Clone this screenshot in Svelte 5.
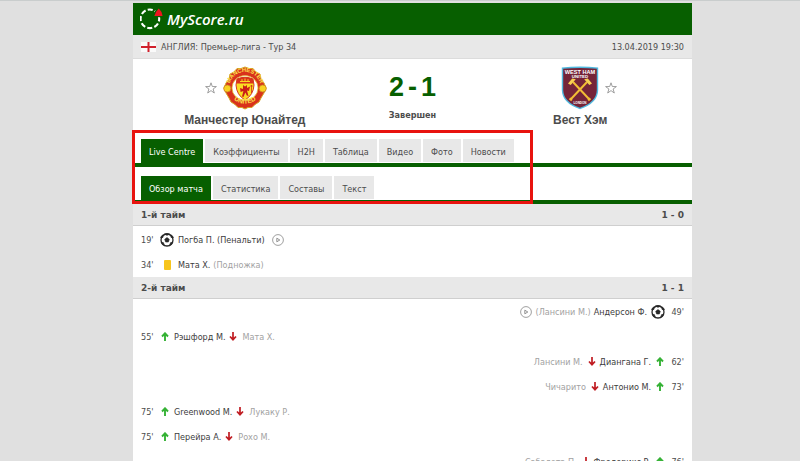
<script>
  const mainTabs = ['Live Centre', 'Коэффициенты', 'H2H', 'Таблица', 'Видео', 'Фото', 'Новости'];
  const subTabs = ['Обзор матча', 'Статистика', 'Составы', 'Текст'];
  let mainActive = $state(0);
  let subActive = $state(0);

  const firstHalf = [
    { side: 'home', time: "19'", icon: 'ball', player: 'Погба П.', detail: '(Пенальти)', video: true },
    { side: 'home', time: "34'", icon: 'card', player: 'Мата Х.', note: '(Подножка)' }
  ];
  const secondHalf = [
    { side: 'away', time: "49'", icon: 'ball', player: 'Андерсон Ф.', note: '(Лансини М.)', video: true },
    { side: 'home', time: "55'", icon: 'sub', player: 'Рэшфорд М.', out: 'Мата Х.' },
    { side: 'away', time: "62'", icon: 'sub', player: 'Диангана Г.', out: 'Лансини М.' },
    { side: 'away', time: "73'", icon: 'sub', player: 'Антонио М.', out: 'Чичарито' },
    { side: 'home', time: "75'", icon: 'sub', player: 'Greenwood M.', out: 'Лукаку Р.' },
    { side: 'home', time: "75'", icon: 'sub', player: 'Перейра А.', out: 'Рохо М.' },
    { side: 'away', time: "76'", icon: 'sub', player: 'Фредерикс Р.', out: 'Сабалета П.' }
  ];
</script>

{#snippet star(label)}
  <button class="star" aria-label={label}>
    <svg width="12" height="12" viewBox="0 0 12 12"><path d="M6 .8 7.3 4.5 11.4 4.6 8.1 7 9.3 11 6 8.6 2.7 11 3.9 7 .6 4.6 4.7 4.5Z" fill="#fff" stroke="#888" stroke-width=".8" /></svg>
  </button>
{/snippet}

{#snippet arrow(dir)}
  <svg class="arrow" width="8" height="9" viewBox="0 0 8 9">
    {#if dir === 'up'}
      <path d="M4 9V1.5M1 4.5 4 1.3 7 4.5" fill="none" stroke="#35b235" stroke-width="1.9" />
    {:else}
      <path d="M4 0V7.5M1 4.5 4 7.7 7 4.5" fill="none" stroke="#c01c22" stroke-width="1.7" />
    {/if}
  </svg>
{/snippet}

{#snippet mark(icon)}
  {#if icon === 'ball'}
    <svg width="14" height="14" viewBox="0 0 14 14">
      <circle cx="7" cy="7" r="6" fill="#fff" stroke="#282828" stroke-width="1.3" />
      <path d="M7 4.6 9.3 6.3 8.4 9H5.6L4.7 6.3ZM4.5.9 7 2.4 9.5.9 7 .3ZM.5 5 3 4.4 3.4 1.6 1.4 3ZM13.5 5 11 4.4 10.6 1.6 12.6 3ZM1.3 9.2 3.4 9.6 4.6 12.8 2.4 11.6ZM12.7 9.2 10.6 9.6 9.4 12.8 11.6 11.6Z" fill="#282828" stroke="#282828" stroke-width=".6" />
    </svg>
  {:else if icon === 'card'}
    <svg width="7" height="10" viewBox="0 0 7 10"><rect width="7" height="10" rx="1" fill="#f7c51d" /></svg>
  {:else}
    {@render arrow('up')}
  {/if}
{/snippet}

{#snippet events(list)}
  <ul class="events">
    {#each list as e}
      <li class={e.side}>
        <span class="time">{e.time}</span>
        <span class="mark" class:narrow={e.icon === 'sub'}>{@render mark(e.icon)}</span>
        <span class="player"><a href="#player">{e.player}</a>{#if e.detail}&nbsp;{e.detail}{/if}</span>
        {#if e.out}
          <span class="down">{@render arrow('down')}</span>
          <a class="muted" href="#player">{e.out}</a>
        {/if}
        {#if e.note}<span class="muted">{e.note}</span>{/if}
        {#if e.video}
          <button class="play" aria-label="Видео">
            <svg width="12" height="12" viewBox="0 0 12 12"><circle cx="6" cy="6" r="5.4" fill="#fff" stroke="#888" stroke-width=".8" /><path d="M4.8 4.2 7.8 6 4.8 7.8Z" fill="none" stroke="#777" stroke-width=".8" /></svg>
          </button>
        {/if}
      </li>
    {/each}
  </ul>
{/snippet}

<div class="page">
  <div class="sheet">
    <header>
      <a class="brand" href="#home">
        <svg width="25" height="24" viewBox="0 0 25 24">
          <circle cx="9.9" cy="11.8" r="9.3" fill="none" stroke="#fff" stroke-width="2.1" stroke-dasharray="5.1 2.2" stroke-dashoffset="2.5" />
          <path d="M13.4 9.4 17.5 1 22.5 9.4Z" fill="#075f00" stroke="#075f00" stroke-width="1.6" />
          <path d="M14.4 9Q15.4 4.6 18.8 1.5Q22 4.4 22.6 9Z" fill="#ed1520" />
        </svg>
        <span>MyScore.ru</span>
      </a>
    </header>

    <div class="league">
      <svg width="15" height="10" viewBox="0 0 15 10"><rect width="15" height="10" fill="#fafafa" /><path d="M0 5H15M7.5 0V10" stroke="#d0202c" stroke-width="2" /></svg>
      <span>АНГЛИЯ: <a href="#league">Премьер-лига - Тур 34</a></span>
      <time datetime="2019-04-13T19:30">13.04.2019 19:30</time>
    </div>

    <section class="match">
      <div class="team">
        <div class="crest">
          {@render star('Добавить Манчестер Юнайтед в избранное')}
          <svg width="44" height="44" viewBox="0 0 44 44">
            <defs>
              <path id="arcTop" d="M6.6 19A15.6 15.6 0 0 1 37.4 19" />
              <path id="arcBottom" d="M5.4 26A17.6 17.6 0 0 0 38.6 26" />
            </defs>
            <path d="M22 1 26 2.5 30 2.5 33 6 37 8 38 13 41 17 43 22 41 27 38 32 36 36 32 38.5 29 41.5 25 41.5 22 43 19 41.5 15 41.5 12 38.5 8 36 6 32 3 27 1 22 3 17 6 13 7 8 11 6 14 2.5 18 2.5Z" fill="#d9321c" stroke="#d7a726" stroke-width="1" />
            <ellipse cx="22" cy="22" rx="13" ry="12.4" fill="#fff" stroke="#e4b82a" stroke-width=".8" />
            <path d="M14 13Q22 9.5 30 13L31 19Q30.5 29 22 34Q13.5 29 13 19Z" fill="#fadb22" stroke="#d33a20" stroke-width="1" />
            <path d="M14 13Q22 9.5 30 13L30.6 17.5H13.4Z" fill="#d9321c" />
            <path d="M17 15.5H27M19 13.2V15.5M22 12.5V15.5M25 13.2V15.5" stroke="#fadb22" stroke-width="1" />
            <path d="M20 19 22 20.5 24 19 24 22 27 20.5 26 25 24 24.5 25.5 30 23.8 29.5 22.3 26.5 20.5 31 19 30.5 20.4 25 17.6 26 17 22 20 23Z" fill="#c91d18" />
            <path d="M28.5 19V27M27.3 20H29.7" stroke="#c91d18" stroke-width=".7" />
            <circle cx="4.3" cy="22.5" r="3.6" fill="#f8d321" stroke="#cc7c20" stroke-width=".8" />
            <circle cx="39.7" cy="22.5" r="3.6" fill="#f8d321" stroke="#cc7c20" stroke-width=".8" />
            <text class="crestText" fill="#fce24a" font-size="5.8"><textPath href="#arcTop" startOffset="50%" text-anchor="middle">MANCHESTER</textPath></text>
            <text class="crestText" fill="#fce24a" font-size="6.5"><textPath href="#arcBottom" startOffset="50%" text-anchor="middle">UNITED</textPath></text>
          </svg>
        </div>
        <a class="name" href="#home-team">Манчестер Юнайтед</a>
      </div>
      <div class="result">
        <strong><span>2</span> <span>-</span> <span>1</span></strong>
        <span class="status">Завершен</span>
      </div>
      <div class="team">
        <div class="crest right">
          {@render star('Добавить Вест Хэм в избранное')}
          <svg width="38" height="44" viewBox="0 0 38 44">
            <path d="M.8 1.5Q19 -.3 37.2 1.5V24Q37 37 19 43.3Q1 37 .8 24Z" fill="#50b9df" />
            <path d="M2.2 2.8Q19 1.2 35.8 2.8V24Q35.5 36 19 41.8Q2.5 36 2.2 24Z" fill="#752438" />
            <path d="M12 16 28 33M26 16 10 33" stroke="#f2bd35" stroke-width="2" />
            <path d="M27.6 32.6 29 34.2M10.4 32.6 9 34.2" stroke="#f2bd35" stroke-width="3" />
            <path d="M7 17.5 11.2 12.6 14.8 13.3 9.7 19ZM31 17.5 26.8 12.6 23.2 13.3 28.3 19Z" fill="#f7cf53" />
            <text class="crestText" x="19" y="8" fill="#fff" font-size="5.6" text-anchor="middle">WEST HAM</text>
            <text class="crestText" x="19" y="11.8" fill="#fff" font-size="4.4" text-anchor="middle">UNITED</text>
            <text class="crestText" x="19" y="38" fill="#fff" font-size="3" text-anchor="middle">LONDON</text>
          </svg>
        </div>
        <a class="name" href="#away-team">Вест Хэм</a>
      </div>
    </section>

    <div class="navs">
      <nav>
        {#each mainTabs as tab, i}
          <button class:active={mainActive === i} onclick={() => (mainActive = i)}>{tab}</button>
        {/each}
      </nav>
      <nav>
        {#each subTabs as tab, i}
          <button class:active={subActive === i} onclick={() => (subActive = i)}>{tab}</button>
        {/each}
      </nav>
      <div class="highlight"></div>
    </div>

    <h2><span>1-й тайм</span><span>1 - 0</span></h2>
    {@render events(firstHalf)}
    <h2><span>2-й тайм</span><span>1 - 1</span></h2>
    {@render events(secondHalf)}
  </div>
</div>

<style>
  :global(body) {
    background: #e0e0e0;
    overflow: hidden;
  }
  .page {
    box-sizing: border-box;
    height: 100vh;
    overflow: hidden;
    padding: 0 108px 0 133px;
    border-top: 1px solid #c9cdcd;
    font: 9px/16px 'DejaVu Sans Condensed', 'Noto Sans', sans-serif;
    color: #4c4c4c;
  }
  .sheet {
    margin-top: 2px;
    background: #fff;
  }
  a {
    color: inherit;
    text-decoration: none;
  }
  button {
    font: inherit;
    color: inherit;
    border: 0;
    padding: 0;
    background: none;
    cursor: pointer;
  }
  svg {
    display: block;
    flex: none;
  }
  header {
    display: flex;
    align-items: center;
    height: 32px;
    padding-left: 7px;
    background: #075f00;
  }
  .brand {
    display: flex;
    align-items: center;
    gap: 2px;
    color: #fff;
    font: italic 600 15px/20px 'Open Sans', sans-serif;
  }
  .league {
    display: flex;
    align-items: center;
    gap: 5px;
    height: 23px;
    padding: 0 8px;
    background: #e8e8e8;
    border-bottom: 1px solid #dcdcdc;
  }
  .league time {
    margin-left: auto;
  }
  .match {
    display: grid;
    grid-template-columns: 2fr 1fr 2fr;
    padding-top: 7px;
    height: 73px;
  }
  .team {
    display: flex;
    flex-direction: column;
    align-items: center;
    gap: 1px;
  }
  .crest {
    display: flex;
    align-items: center;
    gap: 6px;
    margin-right: 18px;
  }
  .crest.right {
    flex-direction: row-reverse;
    margin: 0 0 0 18px;
  }
  .crestText {
    font-family: 'Liberation Sans', sans-serif;
    font-weight: bold;
  }
  .name {
    font: bold 12px/18px 'Liberation Sans', sans-serif;
  }
  .result {
    display: flex;
    flex-direction: column;
    align-items: center;
    padding-top: 6px;
    gap: 6px;
  }
  .result strong {
    display: flex;
    gap: 4px;
    font: bold 27px/30px 'Liberation Sans', sans-serif;
    color: #075f00;
  }
  .status {
    font-weight: bold;
    line-height: 14px;
  }
  .navs {
    position: relative;
  }
  nav {
    display: flex;
    gap: 2px;
    padding: 0 8px;
    border-bottom: 4px solid #075f00;
  }
  nav + nav {
    margin-top: 9px;
  }
  nav button {
    height: 24px;
    padding: 2px 8px 0;
    background: #e8e8e8;
    border-bottom: 1px solid #fff;
  }
  nav button.active {
    background: #075f00;
    border-color: #075f00;
    color: #fff;
  }
  .highlight {
    position: absolute;
    top: -9px;
    left: -1px;
    bottom: 0;
    width: 395px;
    border: 3px solid #e8130f;
    pointer-events: none;
  }
  h2 {
    display: flex;
    justify-content: space-between;
    margin: 0;
    padding: 1px 8px 0;
    border-bottom: 1px solid #cfcfcf;
    background: #e8e8e8;
    font-family: 'DejaVu Sans', 'Noto Sans', sans-serif;
    font-size: 9px;
    line-height: 20px;
  }
  .events {
    margin: 0;
    padding: 1px 8px 0;
    list-style: none;
  }
  .events:last-child {
    padding-top: 0;
  }
  li {
    display: flex;
    align-items: center;
    height: 25px;
  }
  .away {
    flex-direction: row-reverse;
  }
  .time {
    width: 18px;
  }
  .away .time {
    text-align: right;
  }
  .mark {
    display: flex;
    justify-content: center;
    width: 16px;
  }
  .mark.narrow {
    width: 12px;
  }
  .player {
    color: #3c3c3c;
    margin: 0 3px;
  }
  .muted {
    color: #a2a2a2;
  }
  .down {
    margin: 0 5px 0 1px;
  }
  .away .down {
    margin: 0 1px 0 5px;
  }
  .play {
    margin: 0 4px;
  }
</style>
